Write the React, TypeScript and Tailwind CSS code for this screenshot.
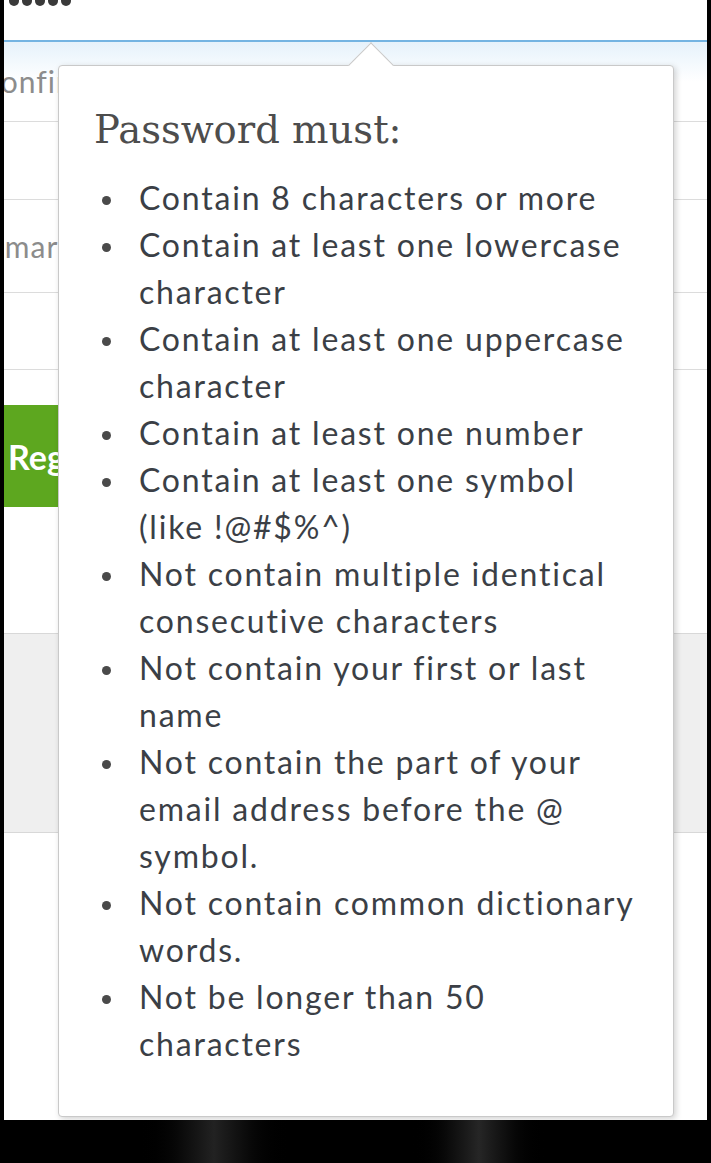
import React from "react";

const rules: string[] = [
  "Contain 8 characters or more",
  "Contain at least one lowercase character",
  "Contain at least one uppercase character",
  "Contain at least one number",
  "Contain at least one symbol (like !@#$%^)",
  "Not contain multiple identical consecutive characters",
  "Not contain your first or last name",
  "Not contain the part of your email address before the @ symbol.",
  "Not contain common dictionary words.",
  "Not be longer than 50 characters",
];

const Field = ({ label, h, shift }: { label?: string; h: string; shift?: string }) => (
  <div className={`${h} flex items-center border-b border-[#dcdcdc] overflow-hidden`}>
    {label && (
      <span className={`${shift} text-[30px] tracking-[1px] text-[#8c8c8c] whitespace-nowrap`}>{label}</span>
    )}
  </div>
);

const App = () => {
  return (
    <div className="w-[711px] h-[1163px] bg-black px-[4px] flex flex-col" style={{ fontFamily: "Lato, 'Open Sans', sans-serif" }}>
      <div className="relative h-[1120px] bg-white overflow-hidden">
        {/* password input (focused) */}
        <div className="h-[40px] overflow-hidden">
          <div className="mt-[-4px] ml-[5px] flex gap-[3px]">
            {[0, 1, 2, 3, 4].map((i) => (
              <span key={i} className="w-[10px] h-[10px] rounded-full bg-[#3a3a3a]" />
            ))}
          </div>
        </div>
        <div className="h-[2px] bg-[#74b4e2]" />
        <div className="bg-gradient-to-b from-[#e6f2fb] via-white to-white">
          <Field label="Confirm password" h="h-[80px]" shift="ml-[-24px]" />
        </div>
        <Field h="h-[78px]" />
        <Field label="Primary email" h="h-[93px]" shift="ml-[-38px]" />
        <Field h="h-[77px]" />

        <div className="mt-[35px] h-[102px] w-[300px] bg-[#5da71f] flex items-center pl-[4px]">
          <span className="text-[34px] font-bold text-white">Register</span>
        </div>

        <div className="mt-[126px] h-[200px] bg-[#efefef] border-y border-[#d8d8d8]" />

        {/* password rules popover */}
        <div className="absolute left-[54px] top-[65px] w-[616px] h-[1052px] bg-white border border-[#c9c9c9] rounded-[4px] shadow-[2px_2px_6px_rgba(0,0,0,0.18)] pt-[39px]">
          <div className="absolute left-[296px] top-[-17px] w-[32px] h-[32px] rotate-45 bg-white border-l border-t border-[#c9c9c9]" />
          <h3
            className="relative ml-[35px] text-[38.5px] leading-[50px] text-[#4d4d4d]"
            style={{ fontFamily: "'DejaVu Serif', serif" }}
          >
            Password must:
          </h3>
          <ul className="mt-[19px] pl-[43px] text-[32px] leading-[47px] tracking-[1.8px] text-[#3b3f46]">
            {rules.map((r) => (
              <li key={r} className="flex">
                <span className="mt-[22px] w-[9px] h-[9px] shrink-0 rounded-full bg-[#4a4a4a]" />
                <span className="ml-[28px] w-[500px]">{r}</span>
              </li>
            ))}
          </ul>
        </div>
      </div>
      <div className="flex-1 flex">
        <div className="w-[130px]" />
        <div className="w-[160px] bg-gradient-to-r from-black via-[#222] to-black" />
        <div className="w-[115px]" />
        <div className="w-[140px] bg-gradient-to-r from-black via-[#262626] to-black" />
      </div>
    </div>
  );
};

export default App;
